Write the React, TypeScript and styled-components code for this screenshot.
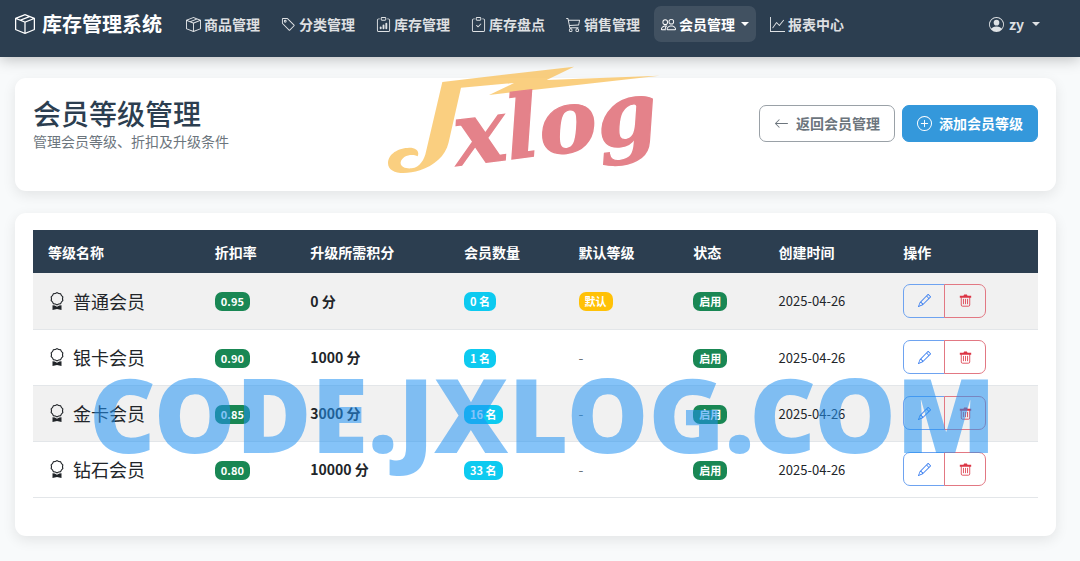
import React from "react";
import styled, { createGlobalStyle } from "styled-components";
import {
  BsArrowLeft,
  BsAward,
  BsBoxSeam,
  BsCart3,
  BsClipboardCheck,
  BsClipboardData,
  BsGraphUp,
  BsPencil,
  BsPeople,
  BsPersonCircle,
  BsPlusCircle,
  BsTag,
} from "react-icons/bs";

const GlobalStyle = createGlobalStyle`
  *, *::before, *::after { box-sizing: border-box; }
  body {
    margin: 0;
    min-height: 100vh;
    background: #f8fafb;
    color: #212529;
    font-family: "Noto Sans CJK SC", sans-serif;
    font-size: 14px;
    line-height: 20px;
  }
  button { font: inherit; cursor: pointer; }
  svg { flex: none; }
`;

const Page = styled.div`
  position: relative;
  min-height: 100vh;
  overflow: hidden;
`;

const Navbar = styled.header`
  position: relative;
  display: flex;
  align-items: center;
  height: 57px;
  padding: 0 33px 9px 15px;
  background: #2c3e50;
  box-shadow: 0 2px 14px rgba(0, 0, 0, 0.25);
`;

const Brand = styled.a`
  display: flex;
  align-items: center;
  gap: 7px;
  margin-right: 17px;
  color: #fff;
  font-size: 20px;
  font-weight: 700;
  line-height: 28px;
  text-decoration: none;
  white-space: nowrap;
`;

const Menu = styled.nav`
  display: flex;
  gap: 7px;
  margin-right: auto;
`;

const MenuLink = styled.a<{ $active?: boolean }>`
  display: flex;
  align-items: center;
  gap: 3px;
  height: 36px;
  padding: 0 7px;
  border-radius: 7px;
  background: ${(p) => (p.$active ? "rgba(255, 255, 255, 0.1)" : "transparent")};
  color: ${(p) => (p.$active ? "#fff" : "rgba(255, 255, 255, 0.85)")};
  font-weight: 600;
  text-decoration: none;
  white-space: nowrap;
`;

const UserLink = styled(MenuLink)`
  gap: 5px;
`;

const Caret = styled.span`
  margin-left: 3px;
  border: 4px solid transparent;
  border-top-color: currentColor;
  border-bottom: 0;
`;

const Content = styled.main`
  display: flex;
  flex-direction: column;
  gap: 22px;
  padding: 21px 24px 24px 15px;
`;

const Card = styled.section`
  padding: 17px 18px;
  border-radius: 11px;
  background: #fff;
  box-shadow: 0 4px 14px rgba(0, 0, 0, 0.09);
`;

const PageHead = styled.div`
  display: flex;
  align-items: center;
  justify-content: space-between;
  margin-bottom: 23px;
`;

const Title = styled.h1`
  margin: 0;
  color: #2c3e50;
  font-size: 28px;
  font-weight: 500;
  line-height: 36px;
`;

const Subtitle = styled.p`
  margin: 0;
  color: #6c757d;
`;

const Actions = styled.div`
  display: flex;
  gap: 7px;
`;

const Button = styled.button<{ $primary?: boolean }>`
  display: flex;
  align-items: center;
  gap: 7px;
  height: 37px;
  padding: 0 14px;
  border: 1px solid ${(p) => (p.$primary ? "#3498db" : "#9aa1a7")};
  border-radius: 7px;
  background: ${(p) => (p.$primary ? "#3498db" : "#fff")};
  color: ${(p) => (p.$primary ? "#fff" : "#6c757d")};
  font-weight: 600;
  white-space: nowrap;
`;

const TableWrap = styled.div`
  padding-bottom: 21px;
`;

const Table = styled.table`
  width: 100%;
  border-collapse: collapse;
  table-layout: fixed;
`;

const HeadCell = styled.th<{ $width: string }>`
  width: ${(p) => p.$width};
  height: 43px;
  padding: 0 15px;
  background: #2c3e50;
  color: #fff;
  font-weight: 600;
  text-align: left;
  white-space: nowrap;
`;

const Row = styled.tr`
  border-bottom: 1px solid #e3e6e9;
  &:nth-child(odd) { background: #f1f1f1; }
`;

const Cell = styled.td`
  height: 56px;
  padding: 0 15px;
  white-space: nowrap;
  vertical-align: middle;
`;

const LevelName = styled.div`
  display: flex;
  align-items: center;
  gap: 7px;
  font-size: 18px;
  line-height: 26px;
`;

const Points = styled.strong`
  font-weight: 700;
`;

const Muted = styled.span`
  color: #6c757d;
`;

const CreatedAt = styled.time`
  font-size: 13px;
`;

const tones = { green: "#198754", cyan: "#0dcaf0", amber: "#ffc107" };

const Badge = styled.span<{ $tone: keyof typeof tones }>`
  display: block;
  width: fit-content;
  margin-top: 2px;
  padding: 0 6px;
  border-radius: 7px;
  background: ${(p) => tones[p.$tone]};
  color: #fff;
  font-size: 11px;
  font-weight: 700;
  line-height: 19px;
`;

const ButtonGroup = styled.div`
  display: flex;
`;

const IconButton = styled.button<{ $color: string; $border: string }>`
  display: flex;
  align-items: center;
  justify-content: center;
  width: 42px;
  height: 34px;
  padding: 0;
  border: 1px solid ${(p) => p.$border};
  background: transparent;
  color: ${(p) => p.$color};
  &:first-child { border-radius: 7px 0 0 7px; }
  &:last-child { margin-left: -1px; border-radius: 0 7px 7px 0; }
`;

const LogoMark = styled.svg`
  position: absolute;
  top: 55px;
  left: 370px;
  width: 310px;
  height: 140px;
  pointer-events: none;
`;

const Watermark = styled.div`
  position: absolute;
  top: 343px;
  left: 89px;
  color: rgba(33, 145, 243, 0.55);
  font-family: "Noto Sans", sans-serif;
  font-size: 103px;
  font-weight: 900;
  line-height: 140px;
  white-space: nowrap;
  pointer-events: none;
`;

const TrashIcon = () => (
  <svg width="13" height="13" viewBox="0 0 16 16" fill="none" stroke="currentColor">
    <path d="M1 2h4.5l.8-1.4h3.4l.8 1.4H15v2.6H1z" fill="currentColor" stroke="none" />
    <path d="M2.8 4v9.5a1.5 1.5 0 0 0 1.5 1.5h7.4a1.5 1.5 0 0 0 1.5-1.5V4M5.5 6v6.5M8 6v6.5M10.5 6v6.5" />
  </svg>
);

const menu = [
  { label: "商品管理", Icon: BsBoxSeam },
  { label: "分类管理", Icon: BsTag },
  { label: "库存管理", Icon: BsClipboardData },
  { label: "库存盘点", Icon: BsClipboardCheck },
  { label: "销售管理", Icon: BsCart3 },
  { label: "会员管理", Icon: BsPeople, active: true },
  { label: "报表中心", Icon: BsGraphUp },
];

const columns = [
  ["等级名称", "16.6%"],
  ["折扣率", "9.5%"],
  ["升级所需积分", "15.3%"],
  ["会员数量", "11.4%"],
  ["默认等级", "11.4%"],
  ["状态", "8.5%"],
  ["创建时间", "12.4%"],
  ["操作", "14.9%"],
];

const levels = [
  { name: "普通会员", rate: "0.95", points: 0, members: 0, isDefault: true },
  { name: "银卡会员", rate: "0.90", points: 1000, members: 1, isDefault: false },
  { name: "金卡会员", rate: "0.85", points: 3000, members: 16, isDefault: false },
  { name: "钻石会员", rate: "0.80", points: 10000, members: 33, isDefault: false },
];

export default function App() {
  return (
    <Page>
      <GlobalStyle />
      <Navbar>
        <Brand href="#">
          <BsBoxSeam size={20} />
          库存管理系统
        </Brand>
        <Menu>
          {menu.map(({ label, Icon, active }) => (
            <MenuLink key={label} href="#" $active={active}>
              <Icon size={15} />
              {label}
              {active && <Caret />}
            </MenuLink>
          ))}
        </Menu>
        <UserLink href="#">
          <BsPersonCircle size={15} />
          zy
          <Caret />
        </UserLink>
      </Navbar>

      <Content>
        <Card>
          <PageHead>
            <div>
              <Title>会员等级管理</Title>
              <Subtitle>管理会员等级、折扣及升级条件</Subtitle>
            </div>
            <Actions>
              <Button type="button">
                <BsArrowLeft size={15} />
                返回会员管理
              </Button>
              <Button type="button" $primary>
                <BsPlusCircle size={15} />
                添加会员等级
              </Button>
            </Actions>
          </PageHead>
        </Card>

        <Card>
          <TableWrap>
            <Table>
              <thead>
                <tr>
                  {columns.map(([label, width]) => (
                    <HeadCell key={label} scope="col" $width={width}>
                      {label}
                    </HeadCell>
                  ))}
                </tr>
              </thead>
              <tbody>
                {levels.map((level) => (
                  <Row key={level.name}>
                    <Cell>
                      <LevelName>
                        <BsAward size={18} />
                        {level.name}
                      </LevelName>
                    </Cell>
                    <Cell>
                      <Badge $tone="green">{level.rate}</Badge>
                    </Cell>
                    <Cell>
                      <Points>{level.points} 分</Points>
                    </Cell>
                    <Cell>
                      <Badge $tone="cyan">{level.members} 名</Badge>
                    </Cell>
                    <Cell>
                      {level.isDefault ? <Badge $tone="amber">默认</Badge> : <Muted>-</Muted>}
                    </Cell>
                    <Cell>
                      <Badge $tone="green">启用</Badge>
                    </Cell>
                    <Cell>
                      <CreatedAt>2025-04-26</CreatedAt>
                    </Cell>
                    <Cell>
                      <ButtonGroup>
                        <IconButton type="button" aria-label="编辑" $color="#3b7ff0" $border="#6ea3f0">
                          <BsPencil size={13} />
                        </IconButton>
                        <IconButton type="button" aria-label="删除" $color="#dc3545" $border="#e27883">
                          <TrashIcon />
                        </IconButton>
                      </ButtonGroup>
                    </Cell>
                  </Row>
                ))}
              </tbody>
            </Table>
          </TableWrap>
        </Card>
      </Content>

      <LogoMark viewBox="0 0 930 420" aria-hidden="true">
        <path
          fill="#f8c25c"
          fillOpacity="0.78"
          d="M217 81 L612 35 L530 75 L868 62 L357 120 L432 84 L273 98 L236 262 C226 305 192 332 150 346 C100 362 54 355 54 325 C54 296 85 279 118 278 C140 278 149 290 143 304 C125 295 96 302 92 322 C90 336 108 342 125 340 C150 336 163 314 168 290 Z"
        />
        <text
          transform="translate(262 332) rotate(-7)"
          fill="#e4828a"
          stroke="#e4828a"
          strokeWidth="4"
          fontFamily="DejaVu Serif, serif"
          fontSize="262"
          fontWeight="700"
          fontStyle="italic"
        >
          xlog
        </text>
      </LogoMark>
      <Watermark aria-hidden="true">CODE.JXLOG.COM</Watermark>
    </Page>
  );
}
